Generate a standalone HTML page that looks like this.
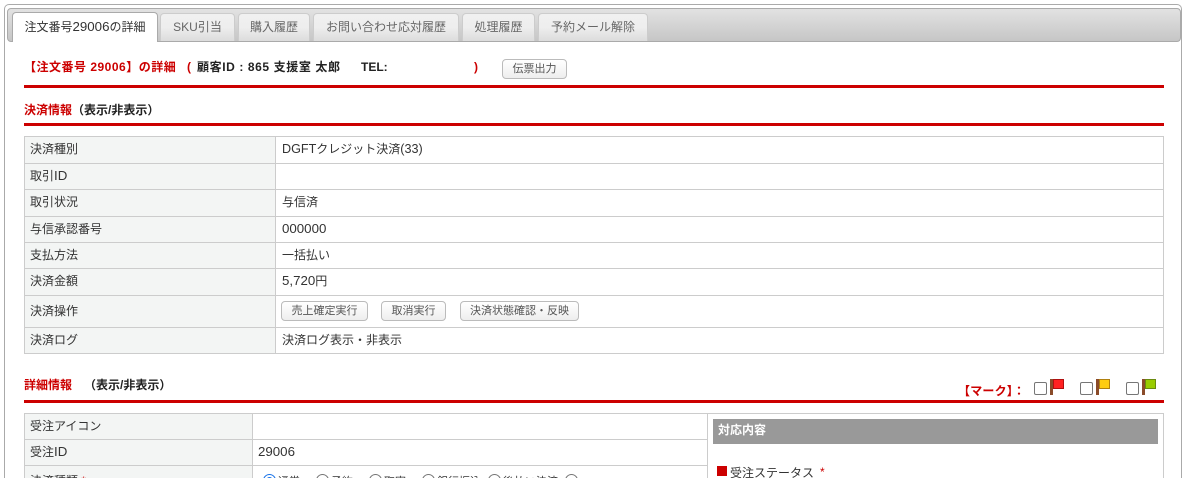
<!DOCTYPE html>
<html lang="ja"><head><meta charset="utf-8"><title>注文詳細</title>
<style>
html,body{margin:0;padding:0;background:#fff;width:1197px;height:478px;overflow:hidden}
body{position:relative;font-family:"Liberation Sans","Noto Sans CJK JP",sans-serif;font-size:12px;color:#333}
.a{position:absolute;white-space:nowrap}
.outer{left:4px;top:4px;width:1176px;height:480px;border:2px solid #aaa;border-bottom:0;border-radius:5px 5px 0 0;border-width:1.5px}
.head{left:7px;top:8px;width:1172px;height:32px;border:1px solid #aaa;border-radius:4px;background:linear-gradient(#e2e2e2,#c6c6c6)}
.tab{top:13px;height:28px;line-height:26px;text-align:center;background:linear-gradient(#f0f0f0 0,#eeeeee 50%,#dcdcdc 100%);border:1px solid #ccc;border-bottom:0;border-radius:4px 4px 0 0;color:#666;box-sizing:border-box}
.tab.on{background:#fff;color:#333;border-color:#aaa;top:12px;height:30px;line-height:28px}
.red{background:#c00;height:3px;left:24px;width:1140px}
.b{font-weight:bold;color:#222}
.r{color:#c00;font-weight:bold}
.line{background:#ccc;height:1px}
.vl{background:#ccc;width:1px}
.lab{background:#f3f5f4}
.t{line-height:18px}
.l{font-size:13.3px}
.btn{border:1px solid #bbb;border-radius:4px;background:linear-gradient(#fff,#eee);height:20px;line-height:18px;text-align:center;box-sizing:border-box;color:#555;font-size:11px}
.cb{width:11px;height:11px;border:1px solid #767676;border-radius:2px;background:#fff;box-sizing:content-box}
.rd{width:11px;height:11px;border:1px solid #767676;border-radius:50%;background:#fff}
</style></head><body>
<div class="a outer"></div>
<div class="a head"></div>
<div class="a tab on" style="left:12px;width:146px">注文番号<span class="l">29006</span>の詳細</div>
<div class="a tab" style="left:160px;width:75px">SKU引当</div>
<div class="a tab" style="left:238px;width:72px">購入履歴</div>
<div class="a tab" style="left:313px;width:146px">お問い合わせ応対履歴</div>
<div class="a tab" style="left:462px;width:73px">処理履歴</div>
<div class="a tab" style="left:538px;width:110px">予約メール解除</div>

<div class="a t r" style="left:24px;top:58px;letter-spacing:.5px">【注文番号 29006】の詳細</div>
<div class="a t r" style="left:187px;top:58px">(</div>
<div class="a t b" style="left:197px;top:58px;letter-spacing:.6px">顧客ID : 865 支援室 太郎</div>
<div class="a t b" style="left:361px;top:58px">TEL:</div>
<div class="a t r" style="left:474px;top:58px">)</div>
<div class="a btn" style="left:502px;top:59px;width:65px">伝票出力</div>
<div class="a red" style="top:85px"></div>
<div class="a t" style="left:24px;top:101px"><span class="r">決済情報</span><span class="b">（表示/非表示）</span></div>
<div class="a red" style="top:123px"></div>

<!-- table 1 -->
<div class="a lab" style="left:24px;top:136px;width:251px;height:218px"></div>
<div class="a line" style="left:24px;top:136px;width:1140px"></div>
<div class="a line" style="left:24px;top:163px;width:1140px"></div>
<div class="a line" style="left:24px;top:189px;width:1140px"></div>
<div class="a line" style="left:24px;top:216px;width:1140px"></div>
<div class="a line" style="left:24px;top:242px;width:1140px"></div>
<div class="a line" style="left:24px;top:268px;width:1140px"></div>
<div class="a line" style="left:24px;top:295px;width:1140px"></div>
<div class="a line" style="left:24px;top:327px;width:1140px"></div>
<div class="a line" style="left:24px;top:353px;width:1140px"></div>
<div class="a vl" style="left:24px;top:136px;height:218px"></div>
<div class="a vl" style="left:275px;top:136px;height:218px"></div>
<div class="a vl" style="left:1163px;top:136px;height:218px"></div>

<div class="a t" style="left:30px;top:140px">決済種別</div>
<div class="a t" style="left:282px;top:140px"><span style="font-size:12.6px">DGFT</span>クレジット決済<span style="font-size:12.6px">(33)</span></div>
<div class="a t" style="left:30px;top:167px">取引<span class="l">ID</span></div>
<div class="a t" style="left:30px;top:193px">取引状況</div>
<div class="a t" style="left:282px;top:193px">与信済</div>
<div class="a t" style="left:30px;top:220px">与信承認番号</div>
<div class="a t" style="left:282px;top:220px"><span class="l">000000</span></div>
<div class="a t" style="left:30px;top:246px">支払方法</div>
<div class="a t" style="left:282px;top:246px">一括払い</div>
<div class="a t" style="left:30px;top:272px">決済金額</div>
<div class="a t" style="left:282px;top:272px"><span class="l">5,720</span>円</div>
<div class="a t" style="left:30px;top:302px">決済操作</div>
<div class="a btn" style="left:281px;top:301px;width:87px">売上確定実行</div>
<div class="a btn" style="left:381px;top:301px;width:65px">取消実行</div>
<div class="a btn" style="left:460px;top:301px;width:119px">決済状態確認・反映</div>
<div class="a t" style="left:30px;top:331px">決済ログ</div>
<div class="a t" style="left:282px;top:331px">決済ログ表示・非表示</div>

<!-- section 2 -->
<div class="a t" style="left:24px;top:376px"><span class="r">詳細情報</span></div>
<div class="a t b" style="left:84px;top:376px">（表示/非表示）</div>
<div class="a t r" style="left:958px;top:382px;letter-spacing:.2px">【マーク】：</div>
<div class="a cb" style="left:1034px;top:382px"></div>
<svg class="a" style="left:1050px;top:379px" width="15" height="16" viewBox="0 0 15 16"><rect x="0" y="0" width="3" height="16" fill="#8a4b2a"/><rect x="3" y="0" width="11" height="10" fill="#f22"/><rect x="3.5" y=".5" width="10" height="9" fill="none" stroke="#b01010"/></svg>
<div class="a cb" style="left:1080px;top:382px"></div>
<svg class="a" style="left:1096px;top:379px" width="15" height="16" viewBox="0 0 15 16"><rect x="0" y="0" width="3" height="16" fill="#8a4b2a"/><rect x="3" y="0" width="11" height="10" fill="#fc1"/><rect x="3.5" y=".5" width="10" height="9" fill="none" stroke="#b08010"/></svg>
<div class="a cb" style="left:1126px;top:382px"></div>
<svg class="a" style="left:1142px;top:379px" width="15" height="16" viewBox="0 0 15 16"><rect x="0" y="0" width="3" height="16" fill="#8a4b2a"/><rect x="3" y="0" width="11" height="10" fill="#9c0"/><rect x="3.5" y=".5" width="10" height="9" fill="none" stroke="#6a8a10"/></svg>
<div class="a red" style="top:400px"></div>

<!-- table 2 -->
<div class="a lab" style="left:24px;top:413px;width:228px;height:65px"></div>
<div class="a line" style="left:24px;top:413px;width:1140px"></div>
<div class="a line" style="left:24px;top:439px;width:683px"></div>
<div class="a line" style="left:24px;top:465px;width:683px"></div>
<div class="a vl" style="left:24px;top:413px;height:65px"></div>
<div class="a vl" style="left:252px;top:413px;height:65px"></div>
<div class="a vl" style="left:707px;top:413px;height:65px"></div>
<div class="a vl" style="left:1163px;top:413px;height:65px"></div>
<div class="a t" style="left:30px;top:417px">受注アイコン</div>
<div class="a t" style="left:30px;top:443px">受注<span class="l">ID</span></div>
<div class="a t" style="left:258px;top:443px"><span class="l">29006</span></div>
<div class="a t" style="left:30px;top:472px">決済種類 <span style="color:#c00">*</span></div>

<div class="a rd" style="left:263px;top:474px;border-color:#1a73e8"></div>
<div class="a" style="left:266px;top:477px;width:7px;height:7px;background:#1a73e8;border-radius:50%"></div>
<div class="a t" style="left:278px;top:473px;font-size:11px">通常</div>
<div class="a rd" style="left:316px;top:474px"></div>
<div class="a t" style="left:331px;top:473px;font-size:11px">予約</div>
<div class="a rd" style="left:369px;top:474px"></div>
<div class="a t" style="left:384px;top:473px;font-size:11px">取寄</div>
<div class="a rd" style="left:422px;top:474px"></div>
<div class="a t" style="left:437px;top:473px;font-size:11px">銀行振込</div>
<div class="a rd" style="left:488px;top:474px"></div>
<div class="a t" style="left:503px;top:473px;font-size:11px">後払い決済</div>
<div class="a rd" style="left:565px;top:474px"></div>

<div class="a" style="left:713px;top:419px;width:445px;height:25px;background:#999;color:#fff;font-weight:bold;line-height:22px;text-indent:5px">対応内容</div>
<div class="a" style="left:717px;top:466px;width:10px;height:10px;background:#c00"></div>
<div class="a t" style="left:730px;top:464px">受注ステータス</div>
<div class="a t" style="left:820px;top:463px;color:#c00">*</div>
</body></html>
